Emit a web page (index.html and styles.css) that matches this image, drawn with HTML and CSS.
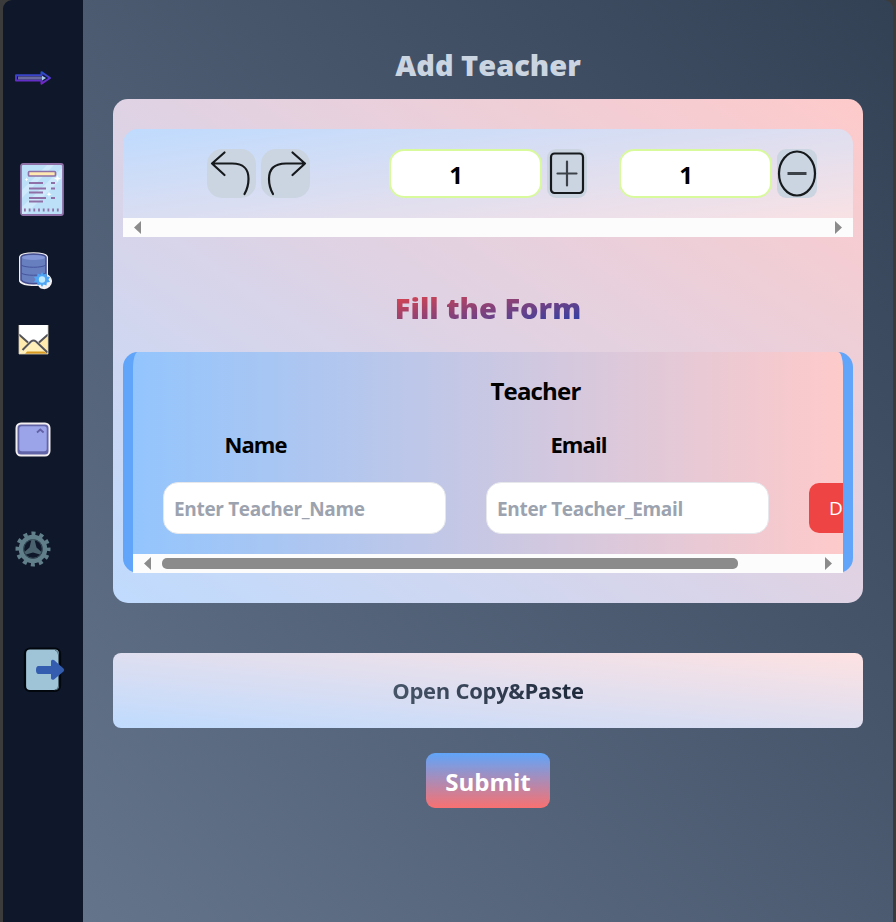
FILE: index.html
```html
<!DOCTYPE html>
<html lang="en">
<head>
<meta charset="utf-8">
<title>Add Teacher</title>
<link rel="stylesheet" href="styles.css">
</head>
<body>
<div class="app">
  <nav class="sidebar">
    <svg class="icon icon-arrow" width="36" height="14" viewBox="0 0 36 14">
      <defs><linearGradient id="ar" gradientUnits="userSpaceOnUse" x1="0" y1="1" x2="0" y2="13"><stop offset="0" stop-color="#2450c8"/><stop offset="1" stop-color="#7a22c8"/></linearGradient></defs>
      <path d="M1 4.200h25.500V1.200L35 7l-8.500 5.600v-3H1z" fill="#10183a" stroke="url(#ar)" stroke-width="2" stroke-linejoin="round"/>
      <path d="M3 7h24" stroke="#68699f" stroke-width="2.800"/>
      <path d="M27 4.700 31 7l-4 2.500z" fill="#a9cbed"/>
    </svg>
    <svg class="icon icon-doc" width="44" height="53" viewBox="0 0 44 53">
      <rect x="1" y="1" width="42" height="51" rx="2" fill="#bce0f7" stroke="#8f70a7" stroke-width="1.800"/>
      <path d="M2 27 27 2h7L2 35zM2 44 42 5v10L6 51H2z" fill="#cde9fb"/>
      <rect x="8.500" y="8.500" width="27" height="4.500" rx="1" fill="#ffe9b0" stroke="#8f70a7" stroke-width="1.700"/>
      <path d="M9 20h14M31 20h4M9 25.500h17M31 25.500h4M9 29.500h14M9 35h17M31 35h4M9 38.500h14" stroke="#8f70a7" stroke-width="1.800"/>
      <path d="M4 47h37" stroke="#8f70a7" stroke-width="3.200" stroke-dasharray="1.800 2.900"/>
      <path d="m37.500 12 .9 2.600 2.600.9-2.600.9-.9 2.600-.9-2.600-2.600-.9 2.600-.9zM29 28.500l.7 2 2 .7-2 .7-.7 2-.7-2-2-.7 2-.7zM6.500 14.500l.5 1.500 1.500.5-1.500.5-.5 1.500-.5-1.500-1.500-.5 1.500-.5z" fill="#fff"/>
    </svg>
    <svg class="icon icon-db" width="35" height="38" viewBox="0 0 35 38">
      <path d="M2 5C3 0 28 0 29 5v18c5 3 5 8 2 11-3 3-8 3-10-1-8 0-17 0-19-4z" fill="#f1eff1" stroke="#f1eff1" stroke-width="2"/>
      <path d="M3 5v23c4 5 21 5 25 0V5C26 1 5 1 3 5z" fill="#687fbf" stroke="#454e91" stroke-width="1.500"/>
      <ellipse cx="15.500" cy="5.500" rx="11.500" ry="2.500" fill="#8396d8"/>
      <path d="M3 13c4 3 21 3 25 0M3 21c4 3 21 3 25 0" fill="none" stroke="#45559c"/>
      <path d="m24 20 1.500 2.500 3-1 .3 3 3.200.5-1.500 2.500 1.500 2.500-3.200.5-.3 3-3-1L24 35l-1.500-2.500-3 1-.3-3-3.200-.5 1.500-2.500L16 25l3.200-.5.3-3 3 1z" fill="#4fa6f4"/>
      <circle cx="24" cy="27.500" r="3.200" fill="#bdeaff"/>
    </svg>
    <svg class="icon icon-mail" width="31" height="31" viewBox="0 0 31 31">
      <path d="M1 1h29v29H1z" fill="#fff"/>
      <path d="m1 11 10 8-10 11zM30 11l-10 8 10 11z" fill="#ffebae"/>
      <path d="m1 30 14.500-13L30 30z" fill="#fff0b9"/>
      <path d="M9 27.500h17l4 2.500H7z" fill="#d89a20"/>
      <path d="m1 10.500 9 8M30 10.500l-9 8M4.500 26 13 17.500q2.500-1.800 5 0L29.500 28.500" fill="none" stroke="#555459" stroke-width="2"/>
      <path d="M1 1v29h29V1" fill="none" stroke="#d5cdb5" stroke-width=".8"/>
    </svg>
    <svg class="icon icon-panel" width="36" height="35" viewBox="0 0 36 35">
      <rect x="1.500" y="1.500" width="33" height="32" rx="4.500" fill="#6264a8" stroke="#f2eef0" stroke-width="2"/>
      <rect x="4.300" y="4.300" width="27.400" height="25" rx="2.500" fill="#9ba4e8"/>
      <path d="m22 10.500 3.300-3 3.300 3" fill="none" stroke="#6260a6" stroke-width="1.800"/>
    </svg>
    <svg class="icon icon-gear" width="36" height="36" viewBox="-18 -18 36 36">
      <circle r="15.500" fill="none" stroke="#607f8a" stroke-width="4" stroke-dasharray="4.058 4.058" stroke-dashoffset="2.029"/>
      <circle r="12" fill="none" stroke="#607f8a" stroke-width="4.500"/>
      <circle r="9.300" fill="none" stroke="#3c535d" stroke-width="1"/>
      <path d="M-1.500-9.500h3L3.500-1.500 8.500 3 7 5.500 0 3.500-7 5.500-8.500 3-3.500-1.500z" fill="#4a626d"/>
    </svg>
    <svg class="icon icon-exit" width="43" height="46" viewBox="0 0 43 46">
      <rect x="2" y="1.500" width="35" height="42.500" rx="5" fill="#9fc4d8" stroke="#02070d" stroke-width="2.200"/>
      <path d="M32 3q3.500 1 3.500 5v31q0 4-4 4" fill="none" stroke="#3f5661" stroke-width=".8"/>
      <path d="M15 19h13v-5q1-2 3-1l9.500 8.500q1.500 1.500 0 3L31 32.500q-2 1-3-1V27H15q-2-.5-2-4t2-4z" fill="#345caf"/>
    </svg>
  </nav>

  <main class="content">
    <h1 class="title"><span>Add Teacher</span></h1>
    <section class="panel">
      <div class="toolbar">
        <div class="tools">
          <button class="tool square undo" aria-label="Undo"><svg width="49" height="49" viewBox="0 0 49 49"><path d="M17.500 3.500 5 14.500l12.500 11.500M5 14.500h20C38 14.500 41.500 21 41.500 30Q41.500 38 37.500 45"/></svg></button>
          <button class="tool square redo" aria-label="Redo"><svg width="49" height="49" viewBox="0 0 49 49"><path d="M31.500 3.500 44 14.500 31.500 26M44 14.500H25C12 14.500 8 21 8 30Q8 38 12 45"/></svg></button>
          <input class="count" type="text" value="1" aria-label="Rows to add">
          <button class="tool narrow plus" aria-label="Add"><svg width="40" height="49" viewBox="0 0 40 49"><rect x="4" y="4.500" width="32" height="39.500" rx="3.500"/><path class="mark" d="M20 12.500v24M10.500 24.500h19"/></svg></button>
          <input class="count second" type="text" value="1" aria-label="Rows to remove">
          <button class="tool narrow minus" aria-label="Remove"><svg width="40" height="49" viewBox="0 0 40 49"><ellipse cx="20" cy="24.500" rx="18" ry="22"/><path class="mark thick" d="M10.500 24.500h19"/></svg></button>
        </div>
        <div class="scrollbar"><i class="left"></i><i class="right"></i></div>
      </div>
      <h2 class="title form-title"><span>Fill the Form</span></h2>
      <div class="card">
        <div class="viewport">
          <div class="sheet">
            <h3 class="group">Teacher</h3>
            <div class="fields">
              <label class="field"><span>Name</span><input type="text" placeholder="Enter Teacher_Name"></label>
              <label class="field"><span>Email</span><input type="text" placeholder="Enter Teacher_Email"></label>
              <button class="delete">Delete</button>
            </div>
          </div>
        </div>
        <div class="scrollbar"><i class="left"></i><b class="thumb"></b><i class="right"></i></div>
      </div>
    </section>
    <button class="copy"><span>Open Copy&amp;Paste</span></button>
    <button class="submit"><span>Submit</span></button>
  </main>
</div>
</body>
</html>
```
FILE: styles.css
```css
* { box-sizing: border-box; }
body {
  margin: 0;
  background: #3b3b3b;
  font-family: "Open Sans", "Noto Sans", sans-serif;
}
h1, h2, h3 { margin: 0; }
button, input { font: inherit; border: 0; margin: 0; padding: 0; }
svg { display: block; }

.app {
  display: grid;
  grid-template-columns: 80px 810px;
  height: 922px;
  margin: 0 3px;
  overflow: hidden;
  border-radius: 9px 9px 0 0;
}
.sidebar {
  display: flex;
  flex-direction: column;
  align-items: flex-start;
  background: #0f172a;
}
.icon { flex: none; }
.icon-arrow { margin: 71px 0 0 12px; }
.icon-doc { margin: 78px 0 0 17px; }
.icon-db { margin: 36px 0 0 15px; }
.icon-mail { margin: 34px 0 0 15px; }
.icon-panel { margin: 67px 0 0 12px; }
.icon-gear { margin: 74px 0 0 12px; }
.icon-exit { margin: 80px 0 0 20px; }

.content {
  display: flex;
  flex-direction: column;
  align-items: center;
  padding: 47px 30px 0;
  background: linear-gradient(to top right, #64748b, #334155);
}
.title {
  height: 36px;
  font-size: 29px;
  line-height: 36px;
  font-weight: 800;
  color: #cbd5e1;
  white-space: nowrap;
}
.panel {
  width: 750px;
  height: 504px;
  margin-top: 16px;
  padding: 30px 10px;
  border-radius: 15px;
  background: linear-gradient(to top right, #bfdbfe, #fecaca);
}
.toolbar {
  height: 108px;
  border-radius: 15px 15px 0 0;
  background: linear-gradient(to bottom right, #bfdbfe, #fee2e2);
}
.tools {
  display: flex;
  height: 89px;
  padding: 20px 0 0 84px;
}
.tool {
  height: 49px;
  background: #cbd5e1;
}
.square { width: 49px; border-radius: 15px; }
.redo { margin-left: 5px; }
.narrow { width: 40px; border-radius: 9px; margin-left: 5px; }
.tool svg {
  fill: none;
  stroke: #171a1d;
  stroke-width: 2.2;
  stroke-linecap: round;
  stroke-linejoin: round;
}
.tool .mark { stroke: #3d4249; }
.tool .thick { stroke-width: 3; stroke-linecap: butt; }
.count {
  width: 153px;
  height: 49px;
  margin-left: 79px;
  padding: 2px 19px 0 0;
  border: 2px solid #d9f99d;
  border-radius: 15px;
  background: #fff;
  color: #000;
  font-size: 24px;
  font-weight: 700;
  text-align: center;
}
.count.second { margin-left: 32px; }

.scrollbar {
  display: flex;
  align-items: center;
  height: 19px;
  padding: 0 11px;
  background: #fcfcfc;
}
.scrollbar i { width: 7px; height: 13px; background: #8b8b8b; }
.left { clip-path: polygon(0 50%, 100% 0, 100% 100%); }
.right { margin-left: auto; clip-path: polygon(0 0, 100% 50%, 0 100%); }
.thumb {
  width: 576px;
  height: 11px;
  margin-left: 11px;
  border-radius: 5px;
  background: #8b8b8b;
}

.form-title { margin-top: 53px; text-align: center; }
.form-title span {
  background: linear-gradient(to bottom right, #ef4444, #1e40af);
  -webkit-background-clip: text;
  background-clip: text;
  color: transparent;
}
.card {
  height: 221px;
  margin-top: 26px;
  border: solid #60a5fa;
  border-width: 0 10px;
  border-radius: 15px;
  background: linear-gradient(to right, #93c5fd, #fecaca);
}
.viewport { height: 202px; overflow: hidden; }
.sheet { width: 805px; padding: 20px 30px 0; }
.group {
  height: 38px;
  font-size: 24px;
  line-height: 38px;
  letter-spacing: -0.8px;
  text-align: center;
}
.fields { display: flex; align-items: flex-end; margin-top: 17px; }
.field {
  display: flex;
  flex-direction: column;
  align-items: center;
  width: 283px;
  margin-right: 40px;
  font-size: 22px;
  font-weight: 700;
}
.field span {
  height: 36px;
  margin-right: 98px;
  line-height: 34px;
  letter-spacing: -0.9px;
}
.field input {
  width: 283px;
  height: 52px;
  margin-top: 19px;
  padding: 2px 10px 0;
  border: 1px solid #e5e7eb;
  border-radius: 15px;
  background: #fff;
  font-size: 19px;
  letter-spacing: -0.33px;
}
.field input::placeholder { color: #9ca3af; }
.delete {
  width: 93px;
  height: 50px;
  margin-bottom: 1px;
  padding-left: 20px;
  border-radius: 10px;
  background: #ef4444;
  color: #fff;
  font-size: 19px;
  text-align: left;
}
.copy {
  width: 750px;
  height: 75px;
  margin-top: 50px;
  border-radius: 8px;
  background: linear-gradient(to top right, #bfdbfe, #fee2e2);
  font-size: 22px;
  font-weight: 700;
  letter-spacing: -0.28px;
}
.copy span {
  position: relative;
  top: -1px;
  background: linear-gradient(to right, #475569, #1e293b);
  -webkit-background-clip: text;
  background-clip: text;
  color: transparent;
}
.submit {
  width: 124px;
  height: 55px;
  margin-top: 25px;
  padding-top: 1px;
  border-radius: 9px;
  background: linear-gradient(to bottom, #60a5fa, #f87171);
  color: #fff;
  font-size: 24px;
  font-weight: 700;
}
```
